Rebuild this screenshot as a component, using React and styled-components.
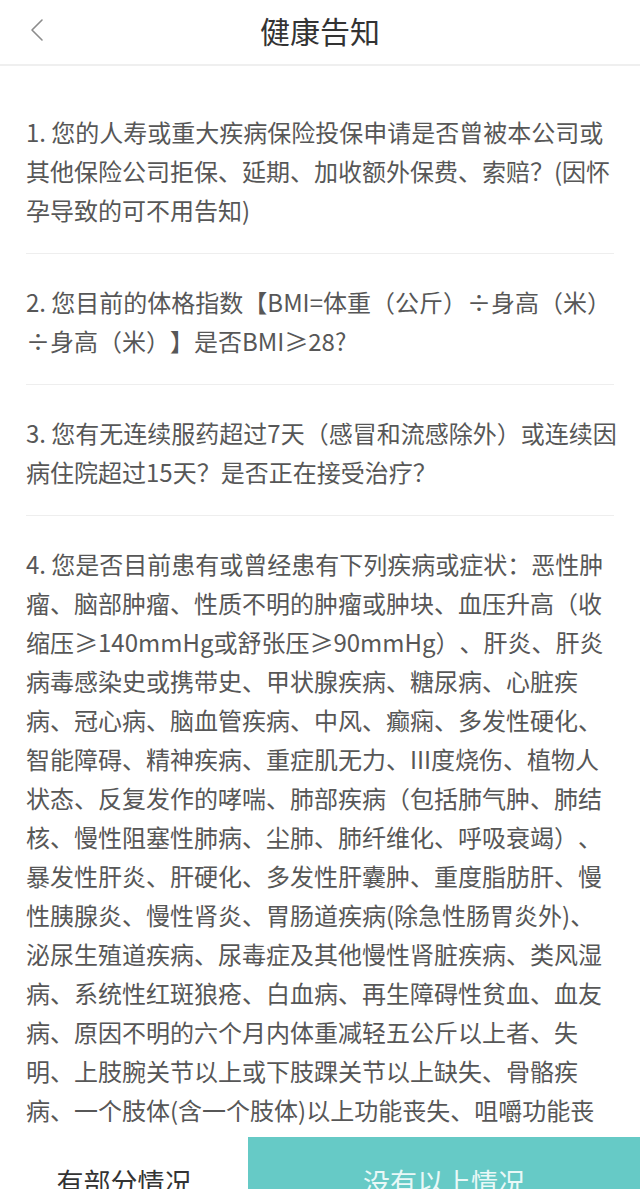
import { createGlobalStyle, styled } from "styled-components";

const GlobalStyle = createGlobalStyle`
    html, body {
        margin: 0;
        padding: 0;
        height: 100%;
        overflow: hidden;
        background: #fff;
    }
    body {
        font-family: "Noto Sans CJK SC", "Noto Sans", sans-serif;
    }
`;

const questions = [
    [
        "1. 您的人寿或重大疾病保险投保申请是否曾被本公司或",
        "其他保险公司拒保、延期、加收额外保费、索赔？(因怀",
        "孕导致的可不用告知)",
    ],
    [
        "2. 您目前的体格指数【BMI=体重（公斤）÷身高（米）",
        "÷身高（米）】是否BMI≥28?",
    ],
    [
        "3. 您有无连续服药超过7天（感冒和流感除外）或连续因",
        "病住院超过15天？是否正在接受治疗？",
    ],
    [
        "4. 您是否目前患有或曾经患有下列疾病或症状：恶性肿",
        "瘤、脑部肿瘤、性质不明的肿瘤或肿块、血压升高（收",
        "缩压≥140mmHg或舒张压≥90mmHg）、肝炎、肝炎",
        "病毒感染史或携带史、甲状腺疾病、糖尿病、心脏疾",
        "病、冠心病、脑血管疾病、中风、癫痫、多发性硬化、",
        "智能障碍、精神疾病、重症肌无力、III度烧伤、植物人",
        "状态、反复发作的哮喘、肺部疾病（包括肺气肿、肺结",
        "核、慢性阻塞性肺病、尘肺、肺纤维化、呼吸衰竭）、",
        "暴发性肝炎、肝硬化、多发性肝囊肿、重度脂肪肝、慢",
        "性胰腺炎、慢性肾炎、胃肠道疾病(除急性肠胃炎外)、",
        "泌尿生殖道疾病、尿毒症及其他慢性肾脏疾病、类风湿",
        "病、系统性红斑狼疮、白血病、再生障碍性贫血、血友",
        "病、原因不明的六个月内体重减轻五公斤以上者、失",
        "明、上肢腕关节以上或下肢踝关节以上缺失、骨骼疾",
        "病、一个肢体(含一个肢体)以上功能丧失、咀嚼功能丧",
    ],
];

export default function HealthNotice() {
    return (
        <>
            <GlobalStyle />
            <Screen>
                <Header>
                    <BackButton aria-label="返回">
                        <svg width="14" height="24" viewBox="0 0 14 24">
                            <polyline
                                points="12,2 2,12 12,22"
                                fill="none"
                                stroke="#8c8c8c"
                                strokeWidth="1.6"
                                strokeLinecap="round"
                                strokeLinejoin="round"
                            />
                        </svg>
                    </BackButton>
                    <Title>健康告知</Title>
                </Header>
                <Content>
                    {questions.map((lines, i) => (
                        <Question key={i} $first={i === 0}>
                            {lines.map((line, j) => (
                                <Line key={j}>{line}</Line>
                            ))}
                        </Question>
                    ))}
                </Content>
                <Footer>
                    <ActionButton>有部分情况</ActionButton>
                    <ActionButton $primary>没有以上情况</ActionButton>
                </Footer>
            </Screen>
        </>
    );
}

const Screen = styled.div`
    height: 1225px;
    display: flex;
    flex-direction: column;
    overflow: hidden;
    background: #fff;
`;

const Header = styled.header`
    position: relative;
    flex: none;
    height: 64px;
    display: flex;
    align-items: center;
    justify-content: center;
    border-bottom: 2px solid #efefef;
`;

const BackButton = styled.button`
    position: absolute;
    left: 30px;
    top: 18px;
    padding: 0;
    border: none;
    background: transparent;
    display: flex;
    cursor: pointer;
`;

const Title = styled.h1`
    margin: 0;
    font-size: 30px;
    font-weight: 400;
    color: #333;
    line-height: 1;
    padding-bottom: 4px;
`;

const Content = styled.main`
    flex: 1;
    min-height: 0;
    overflow: hidden;
    padding: 0 26px;
`;

const Question = styled.section`
    padding: ${(p) => (p.$first ? "46px" : "28px")} 0 24px;
    border-bottom: 1px solid #eeeeee;
    font-size: 24px;
    line-height: 39px;
    color: #575757;
    text-spacing-trim: space-all;
`;

const Line = styled.div`
    white-space: nowrap;
`;

const Footer = styled.footer`
    flex: none;
    height: 88px;
    display: grid;
    grid-template-columns: 248px 1fr;
    background: #fff;
`;

const ActionButton = styled.button`
    border: none;
    margin: 0;
    font-family: inherit;
    font-size: 27px;
    font-weight: 400;
    background: ${(p) => (p.$primary ? "#66cac6" : "#fff")};
    color: ${(p) => (p.$primary ? "#e9f8f7" : "#333")};
    cursor: pointer;
`;
